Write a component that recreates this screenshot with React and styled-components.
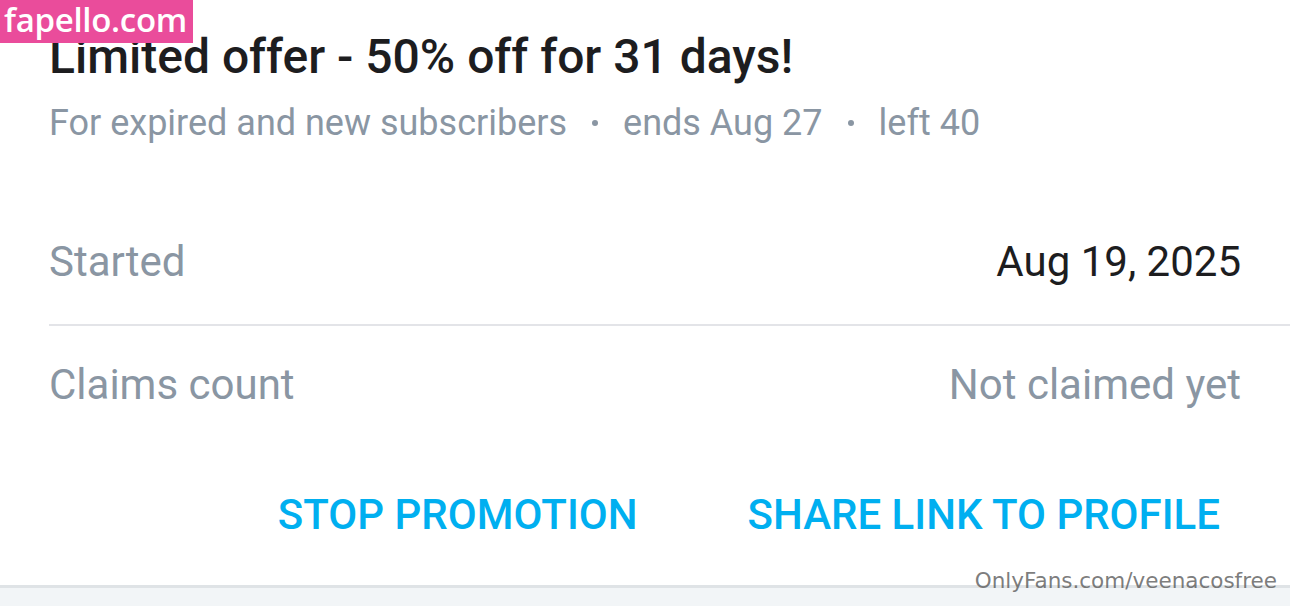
import React from "react";
import styled, { createGlobalStyle } from "styled-components";

const Global = createGlobalStyle`
  html, body { margin: 0; padding: 0; background: #ffffff; }
  body { font-family: Roboto, "Noto Sans", sans-serif; }
`;

const Page = styled.div`
  position: relative;
  width: 1290px;
  height: 606px;
  overflow: hidden;
  background: #ffffff;
  display: flex;
  flex-direction: column;
`;

const Logo = styled.div`
  position: absolute;
  top: 0;
  left: 0;
  height: 43px;
  width: 193px;
  background: #ea4c9b;
  color: #ffffff;
  font-family: "Open Sans", sans-serif;
  font-weight: 600;
  font-size: 33px;
  line-height: 40px;
  padding-left: 4px;
  box-sizing: border-box;
  letter-spacing: -0.3px;
  white-space: nowrap;
  z-index: 2;
`;

const Header = styled.header`
  padding: 29px 0 0 49px;
  display: flex;
  flex-direction: column;
  gap: 16px;
`;

const Title = styled.h1`
  margin: 0;
  font-size: 48px;
  line-height: 56px;
  font-weight: 500;
  color: #1d1d1f;
`;

const Subtitle = styled.div`
  font-size: 36px;
  line-height: 44px;
  color: #8a96a3;
  display: flex;
  align-items: center;
`;

const Dot = styled.span`
  display: inline-block;
  width: 6px;
  height: 6px;
  border-radius: 50%;
  background: #8a96a3;
  margin: 0 25px;
`;

const Details = styled.section`
  margin-top: 55px;
  padding-left: 49px;
`;

const Row = styled.div`
  display: flex;
  align-items: center;
  justify-content: space-between;
  height: ${(p) => p.$h}px;
  padding-right: 49px;
  border-bottom: ${(p) => (p.$divider ? "2px solid #e3e4e8" : "none")};
  font-size: 42px;
  line-height: 50px;
`;

const Label = styled.span`
  color: #8a96a3;
`;

const Value = styled.span`
  color: ${(p) => (p.$muted ? "#8a96a3" : "#1d1d1f")};
`;

const Actions = styled.div`
  flex: 1;
  display: flex;
  align-items: center;
  justify-content: flex-end;
  gap: 110px;
  padding-right: 70px;
`;

const ActionButton = styled.button`
  border: 0;
  background: none;
  padding: 0;
  font-family: Roboto, sans-serif;
  font-size: 42px;
  line-height: 50px;
  font-weight: 500;
  color: #00aff0;
  text-transform: uppercase;
  cursor: pointer;
`;

const Footer = styled.footer`
  height: 18px;
  border-top: 3px solid #dfe3e6;
  background: #f2f5f7;
`;

const Watermark = styled.div`
  position: absolute;
  right: 13px;
  bottom: 12px;
  font-family: "DejaVu Sans", sans-serif;
  font-size: 21.5px;
  line-height: 26px;
  color: rgba(90, 90, 90, 0.8);
  z-index: 2;
`;

export default function App() {
  return (
    <Page>
      <Global />
      <Logo>fapello.com</Logo>
      <Header>
        <Title>Limited offer - 50% off for 31 days!</Title>
        <Subtitle>
          For expired and new subscribers
          <Dot />
          ends Aug 27
          <Dot />
          left 40
        </Subtitle>
      </Header>
      <Details>
        <Row $h={124} $divider>
          <Label>Started</Label>
          <Value>Aug 19, 2025</Value>
        </Row>
        <Row $h={118}>
          <Label>Claims count</Label>
          <Value $muted>Not claimed yet</Value>
        </Row>
      </Details>
      <Actions>
        <ActionButton>Stop promotion</ActionButton>
        <ActionButton>Share link to profile</ActionButton>
      </Actions>
      <Footer />
      <Watermark>OnlyFans.com/veenacosfree</Watermark>
    </Page>
  );
}
